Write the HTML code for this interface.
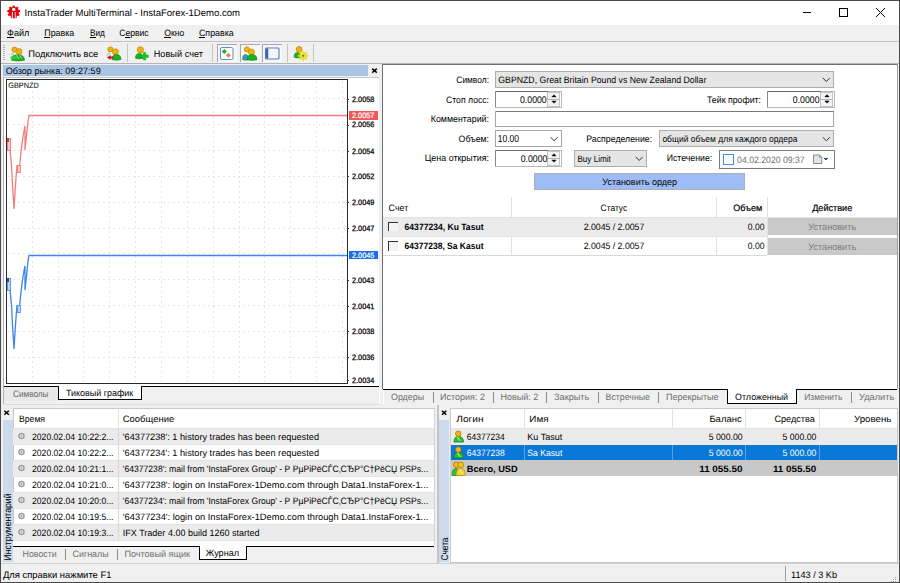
<!DOCTYPE html>
<html><head><meta charset="utf-8"><style>
html,body{margin:0;padding:0;width:900px;height:583px;overflow:hidden;background:#f0f0f0}
svg{display:block}
text{font-family:"Liberation Sans",sans-serif;stroke:currentColor;stroke-width:0px}
</style></head><body>
<svg width="900" height="583" viewBox="0 0 900 583" shape-rendering="crispEdges" text-rendering="geometricPrecision">
<rect x="0" y="0" width="900" height="583" fill="#f0f0f0" />
<rect x="0" y="0" width="900" height="25" fill="#ffffff" />
<g fill="#e8000c" shape-rendering="geometricPrecision"><circle cx="13.7" cy="12" r="5.2"/><rect x="12.6" y="5.6" width="2.2" height="2.6" transform="rotate(0 13.7 12)"/><rect x="12.6" y="5.6" width="2.2" height="2.6" transform="rotate(40 13.7 12)"/><rect x="12.6" y="5.6" width="2.2" height="2.6" transform="rotate(80 13.7 12)"/><rect x="12.6" y="5.6" width="2.2" height="2.6" transform="rotate(120 13.7 12)"/><rect x="12.6" y="5.6" width="2.2" height="2.6" transform="rotate(160 13.7 12)"/><rect x="12.6" y="5.6" width="2.2" height="2.6" transform="rotate(200 13.7 12)"/><rect x="12.6" y="5.6" width="2.2" height="2.6" transform="rotate(240 13.7 12)"/><rect x="12.6" y="5.6" width="2.2" height="2.6" transform="rotate(280 13.7 12)"/><rect x="12.6" y="5.6" width="2.2" height="2.6" transform="rotate(320 13.7 12)"/><circle cx="13.7" cy="9.5" r="1.7" fill="#fff"/><path d="M11.9,12 H12.9 V19 H11.9 Z M14.6,12 H15.6 V19 H14.6 Z" fill="#fff"/><rect x="12.9" y="11.6" width="1.7" height="6.8" fill="#b8141e"/></g>
<text x="24.5" y="16" font-size="9.6" fill="#000" color="#000" textLength="215.5" lengthAdjust="spacingAndGlyphs" >InstaTrader MultiTerminal - InstaForex-1Demo.com</text>
<line x1="802.5" y1="12.5" x2="811" y2="12.5" stroke="#000" stroke-width="1" />
<rect x="839.5" y="8.5" width="8" height="8" fill="none" stroke="#000" stroke-width="1" />
<line x1="876" y1="8" x2="885" y2="17" stroke="#000" stroke-width="1.1" />
<line x1="885" y1="8" x2="876" y2="17" stroke="#000" stroke-width="1.1" />
<rect x="1" y="25" width="898" height="16" fill="#f0f0f0" />
<text x="7" y="36.3" font-size="9.3" fill="#000" color="#000" textLength="22.3" lengthAdjust="spacingAndGlyphs" >Файл</text>
<text x="44.3" y="36.3" font-size="9.3" fill="#000" color="#000" textLength="30" lengthAdjust="spacingAndGlyphs" >Правка</text>
<text x="89.9" y="36.3" font-size="9.3" fill="#000" color="#000" textLength="15" lengthAdjust="spacingAndGlyphs" >Вид</text>
<text x="119.2" y="36.3" font-size="9.3" fill="#000" color="#000" textLength="29.5" lengthAdjust="spacingAndGlyphs" >Сервис</text>
<text x="164.3" y="36.3" font-size="9.3" fill="#000" color="#000" textLength="20" lengthAdjust="spacingAndGlyphs" >Окно</text>
<text x="199" y="36.3" font-size="9.3" fill="#000" color="#000" textLength="34.6" lengthAdjust="spacingAndGlyphs" >Справка</text>
<line x1="7" y1="37.8" x2="14" y2="37.8" stroke="#000" stroke-width="1" />
<line x1="44.3" y1="37.8" x2="50" y2="37.8" stroke="#000" stroke-width="1" />
<line x1="89.9" y1="37.8" x2="95.5" y2="37.8" stroke="#000" stroke-width="1" />
<line x1="124.5" y1="37.8" x2="129.5" y2="37.8" stroke="#000" stroke-width="1" />
<line x1="164.3" y1="37.8" x2="170.5" y2="37.8" stroke="#000" stroke-width="1" />
<line x1="199" y1="37.8" x2="205" y2="37.8" stroke="#000" stroke-width="1" />
<line x1="1" y1="41.5" x2="899" y2="41.5" stroke="#c4c4c4" stroke-width="1" />
<rect x="1" y="42" width="898" height="21" fill="#f0f0f0" />
<rect x="3" y="45" width="2" height="1" fill="#b4b4b4" />
<rect x="3" y="47" width="2" height="1" fill="#b4b4b4" />
<rect x="3" y="49" width="2" height="1" fill="#b4b4b4" />
<rect x="3" y="51" width="2" height="1" fill="#b4b4b4" />
<rect x="3" y="53" width="2" height="1" fill="#b4b4b4" />
<rect x="3" y="55" width="2" height="1" fill="#b4b4b4" />
<rect x="3" y="57" width="2" height="1" fill="#b4b4b4" />
<rect x="3" y="59" width="2" height="1" fill="#b4b4b4" />
<text x="28.3" y="56.7" font-size="9.3" fill="#000" color="#000" textLength="70" lengthAdjust="spacingAndGlyphs" >Подключить все</text>
<text x="153.7" y="56.7" font-size="9.3" fill="#000" color="#000" textLength="49.3" lengthAdjust="spacingAndGlyphs" >Новый счет</text>
<line x1="127.7" y1="44" x2="127.7" y2="61.5" stroke="#c4c4c4" stroke-width="1" />
<line x1="212.5" y1="44" x2="212.5" y2="61.5" stroke="#c4c4c4" stroke-width="1" />
<line x1="287" y1="44" x2="287" y2="61.5" stroke="#c4c4c4" stroke-width="1" />
<line x1="313" y1="44" x2="313" y2="61.5" stroke="#c4c4c4" stroke-width="1" />
<rect x="217" y="44" width="20" height="18" fill="#f7f7f7" />
<line x1="217.5" y1="44" x2="217.5" y2="62" stroke="#a8a8a8" stroke-width="1" />
<line x1="217" y1="44.5" x2="237" y2="44.5" stroke="#a8a8a8" stroke-width="1" />
<rect x="240" y="44" width="20" height="18" fill="#f7f7f7" />
<line x1="240.5" y1="44" x2="240.5" y2="62" stroke="#a8a8a8" stroke-width="1" />
<line x1="240" y1="44.5" x2="260" y2="44.5" stroke="#a8a8a8" stroke-width="1" />
<rect x="262" y="44" width="20" height="18" fill="#f7f7f7" />
<line x1="262.5" y1="44" x2="262.5" y2="62" stroke="#a8a8a8" stroke-width="1" />
<line x1="262" y1="44.5" x2="282" y2="44.5" stroke="#a8a8a8" stroke-width="1" />
<line x1="1" y1="63.5" x2="899" y2="63.5" stroke="#b4b4b4" stroke-width="1" />
<rect x="3" y="65" width="365" height="11" fill="#a9c5e3" />
<text x="5.7" y="74" font-size="9.2" fill="#000" color="#000" textLength="95" lengthAdjust="spacingAndGlyphs" >Обзор рынка: 09:27:59</text>
<path d="M372.2,68.6 L376.8,72.6 M376.8,68.6 L372.2,72.6" fill="none" stroke="#000" stroke-width="1.4" shape-rendering="geometricPrecision"/>
<line x1="3" y1="77.5" x2="379" y2="77.5" stroke="#c8c8c8" stroke-width="1" />
<rect x="379" y="64" width="3" height="325" fill="#f0f0f0" />
<rect x="4" y="78" width="375" height="308" fill="#ffffff" />
<rect x="6.5" y="79.5" width="341" height="304" fill="#ffffff" stroke="#2a2a2a" stroke-width="1" />
<line x1="3.5" y1="77" x2="3.5" y2="404" stroke="#b4b4b4" stroke-width="1" />
<line x1="32.5" y1="81" x2="32.5" y2="382" stroke="#e6e6e6" stroke-width="1" stroke-dasharray="2 3"/>
<line x1="58.5" y1="81" x2="58.5" y2="382" stroke="#e6e6e6" stroke-width="1" stroke-dasharray="2 3"/>
<line x1="83.5" y1="81" x2="83.5" y2="382" stroke="#e6e6e6" stroke-width="1" stroke-dasharray="2 3"/>
<line x1="109.5" y1="81" x2="109.5" y2="382" stroke="#e6e6e6" stroke-width="1" stroke-dasharray="2 3"/>
<line x1="135.5" y1="81" x2="135.5" y2="382" stroke="#e6e6e6" stroke-width="1" stroke-dasharray="2 3"/>
<line x1="161.5" y1="81" x2="161.5" y2="382" stroke="#e6e6e6" stroke-width="1" stroke-dasharray="2 3"/>
<line x1="187.5" y1="81" x2="187.5" y2="382" stroke="#e6e6e6" stroke-width="1" stroke-dasharray="2 3"/>
<line x1="213.5" y1="81" x2="213.5" y2="382" stroke="#e6e6e6" stroke-width="1" stroke-dasharray="2 3"/>
<line x1="239.5" y1="81" x2="239.5" y2="382" stroke="#e6e6e6" stroke-width="1" stroke-dasharray="2 3"/>
<line x1="264.5" y1="81" x2="264.5" y2="382" stroke="#e6e6e6" stroke-width="1" stroke-dasharray="2 3"/>
<line x1="290.5" y1="81" x2="290.5" y2="382" stroke="#e6e6e6" stroke-width="1" stroke-dasharray="2 3"/>
<line x1="316.5" y1="81" x2="316.5" y2="382" stroke="#e6e6e6" stroke-width="1" stroke-dasharray="2 3"/>
<line x1="342.5" y1="81" x2="342.5" y2="382" stroke="#e6e6e6" stroke-width="1" stroke-dasharray="2 3"/>
<line x1="8" y1="98.5" x2="346" y2="98.5" stroke="#e6e6e6" stroke-width="1" stroke-dasharray="2 3"/>
<line x1="8" y1="124.5" x2="346" y2="124.5" stroke="#e6e6e6" stroke-width="1" stroke-dasharray="2 3"/>
<line x1="8" y1="150.5" x2="346" y2="150.5" stroke="#e6e6e6" stroke-width="1" stroke-dasharray="2 3"/>
<line x1="8" y1="176.5" x2="346" y2="176.5" stroke="#e6e6e6" stroke-width="1" stroke-dasharray="2 3"/>
<line x1="8" y1="202.5" x2="346" y2="202.5" stroke="#e6e6e6" stroke-width="1" stroke-dasharray="2 3"/>
<line x1="8" y1="228.5" x2="346" y2="228.5" stroke="#e6e6e6" stroke-width="1" stroke-dasharray="2 3"/>
<line x1="8" y1="253.5" x2="346" y2="253.5" stroke="#e6e6e6" stroke-width="1" stroke-dasharray="2 3"/>
<line x1="8" y1="279.5" x2="346" y2="279.5" stroke="#e6e6e6" stroke-width="1" stroke-dasharray="2 3"/>
<line x1="8" y1="305.5" x2="346" y2="305.5" stroke="#e6e6e6" stroke-width="1" stroke-dasharray="2 3"/>
<line x1="8" y1="331.5" x2="346" y2="331.5" stroke="#e6e6e6" stroke-width="1" stroke-dasharray="2 3"/>
<line x1="8" y1="357.5" x2="346" y2="357.5" stroke="#e6e6e6" stroke-width="1" stroke-dasharray="2 3"/>
<text x="8.3" y="87.7" font-size="7.8" fill="#000" color="#000" textLength="30.4" lengthAdjust="spacingAndGlyphs" >GBPNZD</text>
<path d="M10,150 L11.5,165 L12.5,185 L14,209 L15,192 L16,178 L17,165 M19.5,167 L21,152 L22.5,140 L24,131 L25,126 V150 L26.5,136 L28,121 L29,115.5 H347" fill="none" stroke="#f47c7c" stroke-width="1.3" shape-rendering="geometricPrecision"/>
<path d="M10,290 L11.5,305 L12.5,325 L14,349 L15,332 L16,318 L17,305 M19.5,307 L21,292 L22.5,280 L24,271 L25,266 V290 L26.5,276 L28,261 L29,255.5 H347" fill="none" stroke="#3d84ee" stroke-width="1.3" shape-rendering="geometricPrecision"/>
<rect x="7" y="138" width="3.5" height="12" fill="#f8c8c8" stroke="#f07070" stroke-width="0.8" />
<rect x="7" y="138" width="2" height="4" fill="#c83c3c" />
<rect x="17" y="165" width="3" height="7.5" fill="#f8c8c8" stroke="#f07070" stroke-width="0.8" />
<rect x="7" y="278" width="3.5" height="12" fill="#c0d4f4" stroke="#4a86e8" stroke-width="0.8" />
<rect x="7" y="278" width="2" height="4" fill="#2050a0" />
<rect x="17" y="305" width="3" height="7.5" fill="#c0d4f4" stroke="#4a86e8" stroke-width="0.8" />
<rect x="347" y="98.5" width="2" height="1.5" fill="#333" />
<text x="352" y="101.8" font-size="7.8" fill="#000" color="#000" textLength="22.3" lengthAdjust="spacingAndGlyphs" style="stroke-width:0.25px">2.0058</text>
<rect x="347" y="124.5" width="2" height="1.5" fill="#333" />
<text x="352" y="127.39999999999999" font-size="7.8" fill="#000" color="#000" textLength="22.3" lengthAdjust="spacingAndGlyphs" style="stroke-width:0.25px">2.0056</text>
<rect x="347" y="150.5" width="2" height="1.5" fill="#333" />
<text x="352" y="153.70000000000002" font-size="7.8" fill="#000" color="#000" textLength="22.3" lengthAdjust="spacingAndGlyphs" style="stroke-width:0.25px">2.0054</text>
<rect x="347" y="175.5" width="2" height="1.5" fill="#333" />
<text x="352" y="179.10000000000002" font-size="7.8" fill="#000" color="#000" textLength="22.3" lengthAdjust="spacingAndGlyphs" style="stroke-width:0.25px">2.0052</text>
<rect x="347" y="201.5" width="2" height="1.5" fill="#333" />
<text x="352" y="204.8" font-size="7.8" fill="#000" color="#000" textLength="22.3" lengthAdjust="spacingAndGlyphs" style="stroke-width:0.25px">2.0049</text>
<rect x="347" y="227.5" width="2" height="1.5" fill="#333" />
<text x="352" y="230.60000000000002" font-size="7.8" fill="#000" color="#000" textLength="22.3" lengthAdjust="spacingAndGlyphs" style="stroke-width:0.25px">2.0047</text>
<rect x="347" y="279.5" width="2" height="1.5" fill="#333" />
<text x="352" y="282.6" font-size="7.8" fill="#000" color="#000" textLength="22.3" lengthAdjust="spacingAndGlyphs" style="stroke-width:0.25px">2.0043</text>
<rect x="347" y="305.5" width="2" height="1.5" fill="#333" />
<text x="352" y="308.6" font-size="7.8" fill="#000" color="#000" textLength="22.3" lengthAdjust="spacingAndGlyphs" style="stroke-width:0.25px">2.0041</text>
<rect x="347" y="330.5" width="2" height="1.5" fill="#333" />
<text x="352" y="334.0" font-size="7.8" fill="#000" color="#000" textLength="22.3" lengthAdjust="spacingAndGlyphs" style="stroke-width:0.25px">2.0038</text>
<rect x="347" y="356.5" width="2" height="1.5" fill="#333" />
<text x="352" y="360.0" font-size="7.8" fill="#000" color="#000" textLength="22.3" lengthAdjust="spacingAndGlyphs" style="stroke-width:0.25px">2.0036</text>
<rect x="347" y="379.5" width="2" height="1.5" fill="#333" />
<text x="352" y="383.3" font-size="7.8" fill="#000" color="#000" textLength="22.3" lengthAdjust="spacingAndGlyphs" style="stroke-width:0.25px">2.0034</text>
<rect x="349" y="111" width="29" height="8.5" fill="#f05858" />
<text x="352" y="117.8" font-size="7.8" fill="#fff" color="#fff" textLength="22.3" lengthAdjust="spacingAndGlyphs" style="stroke-width:0.2px">2.0057</text>
<rect x="349" y="250.5" width="29" height="8.5" fill="#1a6ee8" />
<text x="352" y="257.5" font-size="7.8" fill="#fff" color="#fff" textLength="22.3" lengthAdjust="spacingAndGlyphs" style="stroke-width:0.2px">2.0045</text>
<rect x="4" y="384" width="375" height="3" fill="#ffffff" />
<rect x="4" y="387" width="375" height="17" fill="#f0f0f0" />
<rect x="4" y="387" width="54" height="14" fill="#e9e9e9" />
<line x1="4" y1="386.5" x2="58.5" y2="386.5" stroke="#000" stroke-width="1" />
<line x1="142" y1="386.5" x2="379" y2="386.5" stroke="#000" stroke-width="1" />
<rect x="58" y="384" width="84" height="16" fill="#ffffff" />
<path d="M58.5,386 V399.5 H141.5 V386" fill="none" stroke="#000" stroke-width="1.2" />
<text x="13" y="396.5" font-size="9.2" fill="#666666" color="#666666" textLength="35.5" lengthAdjust="spacingAndGlyphs" >Символы</text>
<text x="66" y="396" font-size="9.2" fill="#000" color="#000" textLength="67.3" lengthAdjust="spacingAndGlyphs" >Тиковый график</text>
<line x1="379.5" y1="386" x2="379.5" y2="404" stroke="#ffffff" stroke-width="1" />
<line x1="4" y1="404.5" x2="380" y2="404.5" stroke="#dcdcdc" stroke-width="1" />
<rect x="382" y="64" width="516" height="325" fill="#ffffff" />
<line x1="382.5" y1="64" x2="382.5" y2="389" stroke="#6e6e6e" stroke-width="1" />
<line x1="382" y1="64.5" x2="898" y2="64.5" stroke="#6e6e6e" stroke-width="1" />
<line x1="897.5" y1="64" x2="897.5" y2="389" stroke="#a0a0a0" stroke-width="1" />
<text x="456.3" y="82.8" font-size="9.3" fill="#000" color="#000" textLength="32.7" lengthAdjust="spacingAndGlyphs" >Символ:</text>
<text x="446" y="102.7" font-size="9.3" fill="#000" color="#000" textLength="43" lengthAdjust="spacingAndGlyphs" >Стоп лосс:</text>
<text x="430.8" y="122.2" font-size="9.3" fill="#000" color="#000" textLength="58.2" lengthAdjust="spacingAndGlyphs" >Комментарий:</text>
<text x="458.6" y="141.8" font-size="9.3" fill="#000" color="#000" textLength="30.4" lengthAdjust="spacingAndGlyphs" >Объем:</text>
<text x="424.8" y="161.3" font-size="9.3" fill="#000" color="#000" textLength="64.2" lengthAdjust="spacingAndGlyphs" >Цена открытия:</text>
<text x="707" y="102.5" font-size="9.3" fill="#000" color="#000" textLength="54" lengthAdjust="spacingAndGlyphs" >Тейк профит:</text>
<text x="586.3000000000001" y="142.2" font-size="9.3" fill="#000" color="#000" textLength="65.8" lengthAdjust="spacingAndGlyphs" >Распределение:</text>
<text x="666.7" y="161.4" font-size="9.3" fill="#000" color="#000" textLength="45.5" lengthAdjust="spacingAndGlyphs" >Истечение:</text>
<rect x="495.5" y="71.5" width="338" height="16" fill="#e5e5e5" stroke="#adadad" stroke-width="1" />
<text x="498.3" y="82.9" font-size="9.2" fill="#000" color="#000" textLength="208" lengthAdjust="spacingAndGlyphs" >GBPNZD,  Great Britain Pound vs New Zealand Dollar</text>
<path d="M822.8,77.9 L826.3,81.5 L829.8,77.9" fill="none" stroke="#333" stroke-width="1" shape-rendering="geometricPrecision"/>
<rect x="495.5" y="91.8" width="65.5" height="15.5" fill="#ffffff" stroke="#b8b8b8" stroke-width="1" />
<line x1="495" y1="91.8" x2="548" y2="91.8" stroke="#6a6a6a" stroke-width="1" />
<line x1="495.5" y1="91.3" x2="495.5" y2="107.3" stroke="#8a8a8a" stroke-width="1" />
<rect x="547.5" y="92.8" width="12" height="13.5" fill="#f4f4f4" stroke="#c4c4c4" stroke-width="1" />
<line x1="547.5" y1="99.3" x2="559.5" y2="99.3" stroke="#b0b0b0" stroke-width="1" />
<path d="M551.8,97.0 L554,94.7 L556.2,97.0 Z" fill="#000" stroke="#000" stroke-width="0.4" shape-rendering="geometricPrecision"/>
<path d="M551.8,101.0 L554,103.3 L556.2,101.0 Z" fill="#000" stroke="#000" stroke-width="0.4" shape-rendering="geometricPrecision"/>
<text x="546.7" y="102.6" font-size="9.7" fill="#000" color="#000" text-anchor="end" textLength="26.7" lengthAdjust="spacingAndGlyphs" >0.0000</text>
<rect x="767.5" y="91.7" width="66.5" height="15.5" fill="#ffffff" stroke="#b8b8b8" stroke-width="1" />
<line x1="767" y1="91.7" x2="821" y2="91.7" stroke="#6a6a6a" stroke-width="1" />
<line x1="767.5" y1="91.2" x2="767.5" y2="107.2" stroke="#8a8a8a" stroke-width="1" />
<rect x="820.5" y="92.7" width="12" height="13.5" fill="#f4f4f4" stroke="#c4c4c4" stroke-width="1" />
<line x1="820.5" y1="99.2" x2="832.5" y2="99.2" stroke="#b0b0b0" stroke-width="1" />
<path d="M824.8,96.9 L827,94.60000000000001 L829.2,96.9 Z" fill="#000" stroke="#000" stroke-width="0.4" shape-rendering="geometricPrecision"/>
<path d="M824.8,100.9 L827,103.2 L829.2,100.9 Z" fill="#000" stroke="#000" stroke-width="0.4" shape-rendering="geometricPrecision"/>
<text x="819.5" y="102.5" font-size="9.7" fill="#000" color="#000" text-anchor="end" textLength="26.7" lengthAdjust="spacingAndGlyphs" >0.0000</text>
<rect x="495.5" y="111.2" width="338" height="15" fill="#ffffff" stroke="#a6a6a6" stroke-width="1" />
<line x1="495.5" y1="111.2" x2="833.5" y2="111.2" stroke="#7a7a7a" stroke-width="1" />
<rect x="495.5" y="130.5" width="65.5" height="15.5" fill="#ffffff" stroke="#a6a6a6" stroke-width="1" />
<text x="497.7" y="141.6" font-size="10.2" fill="#000" color="#000" textLength="21.3" lengthAdjust="spacingAndGlyphs" >10.00</text>
<path d="M550.6,137.2 L554.1,140.8 L557.6,137.2" fill="none" stroke="#333" stroke-width="1" shape-rendering="geometricPrecision"/>
<rect x="659" y="130.5" width="174.5" height="16" fill="#e5e5e5" stroke="#adadad" stroke-width="1" />
<text x="662.4" y="142.2" font-size="9.2" fill="#000" color="#000" textLength="135" lengthAdjust="spacingAndGlyphs" >общий объем для каждого ордера</text>
<path d="M822.8,137.2 L826.3,140.8 L829.8,137.2" fill="none" stroke="#333" stroke-width="1" shape-rendering="geometricPrecision"/>
<rect x="495.5" y="150.8" width="65.5" height="15.5" fill="#ffffff" stroke="#b8b8b8" stroke-width="1" />
<line x1="495" y1="150.8" x2="548" y2="150.8" stroke="#6a6a6a" stroke-width="1" />
<line x1="495.5" y1="150.3" x2="495.5" y2="166.3" stroke="#8a8a8a" stroke-width="1" />
<rect x="547.5" y="151.8" width="12" height="13.5" fill="#f4f4f4" stroke="#c4c4c4" stroke-width="1" />
<line x1="547.5" y1="158.3" x2="559.5" y2="158.3" stroke="#b0b0b0" stroke-width="1" />
<path d="M551.8,156.0 L554,153.70000000000002 L556.2,156.0 Z" fill="#000" stroke="#000" stroke-width="0.4" shape-rendering="geometricPrecision"/>
<path d="M551.8,160.0 L554,162.3 L556.2,160.0 Z" fill="#000" stroke="#000" stroke-width="0.4" shape-rendering="geometricPrecision"/>
<text x="547.4" y="161.60000000000002" font-size="9.7" fill="#000" color="#000" text-anchor="end" textLength="26.7" lengthAdjust="spacingAndGlyphs" >0.0000</text>
<rect x="574" y="150.5" width="72.5" height="16" fill="#e5e5e5" stroke="#adadad" stroke-width="1" />
<text x="577.4" y="162" font-size="9.2" fill="#000" color="#000" textLength="33.5" lengthAdjust="spacingAndGlyphs" >Buy Limit</text>
<path d="M635.7,156.89999999999998 L639.2,160.5 L642.7,156.89999999999998" fill="none" stroke="#333" stroke-width="1" shape-rendering="geometricPrecision"/>
<rect x="719.5" y="150.5" width="115" height="17.5" fill="#ffffff" stroke="#7a7a7a" stroke-width="1" />
<rect x="723.5" y="154.5" width="10" height="10" fill="#ffffff" stroke="#3c8ce6" stroke-width="1" />
<text x="737.1" y="163.1" font-size="9.2" fill="#6d6d6d" color="#6d6d6d" textLength="67.6" lengthAdjust="spacingAndGlyphs" >04.02.2020 09:37</text>
<path d="M813.5,155 H819.5 L821.8,157.3 V163.5 H813.5 Z" fill="#e4e4e4" stroke="#8a8a8a" stroke-width="1" shape-rendering="geometricPrecision"/>
<path d="M819.5,155 V157.3 H821.8" fill="none" stroke="#8a8a8a" stroke-width="0.8" shape-rendering="geometricPrecision"/>
<path d="M823.5,157.5 L829,157.5 L826.25,160.5 Z" fill="#2b4f9e" />
<rect x="534.5" y="173.5" width="210" height="16" fill="#9ebcf5" stroke="#b0b0b0" stroke-width="1" />
<text x="602.3" y="184.6" font-size="9.2" fill="#000" color="#000" textLength="74.7" lengthAdjust="spacingAndGlyphs" >Установить ордер</text>
<rect x="383" y="197" width="514" height="20" fill="#ffffff" />
<line x1="383" y1="217.5" x2="897" y2="217.5" stroke="#e2e2e2" stroke-width="1" />
<line x1="511.5" y1="197" x2="511.5" y2="255" stroke="#e2e2e2" stroke-width="1" />
<line x1="716.5" y1="197" x2="716.5" y2="255" stroke="#e2e2e2" stroke-width="1" />
<line x1="767.5" y1="197" x2="767.5" y2="255" stroke="#e2e2e2" stroke-width="1" />
<text x="388.6" y="210.6" font-size="9.2" fill="#000" color="#000" textLength="19.6" lengthAdjust="spacingAndGlyphs" >Счет</text>
<text x="600.6" y="210.9" font-size="9.2" fill="#000" color="#000" textLength="26.6" lengthAdjust="spacingAndGlyphs" >Статус</text>
<text x="733.3" y="210.6" font-size="9.2" fill="#000" color="#000" textLength="28.9" lengthAdjust="spacingAndGlyphs" style="stroke-width:0.2px">Объем</text>
<text x="812.2" y="210.6" font-size="9.2" fill="#000" color="#000" textLength="40" lengthAdjust="spacingAndGlyphs" style="stroke-width:0.2px">Действие</text>
<rect x="383" y="218" width="384" height="17.5" fill="#ebebeb" />
<line x1="383" y1="236.5" x2="767" y2="236.5" stroke="#e2e2e2" stroke-width="1" />
<line x1="383" y1="255.5" x2="767" y2="255.5" stroke="#d8d8d8" stroke-width="1" />
<rect x="388.5" y="222.0" width="9" height="9" fill="#f4f4f4" />
<path d="M388.5,231.0 V222.0 H397.5" fill="none" stroke="#333" stroke-width="1" />
<text x="404.6" y="229.6" font-size="9.2" fill="#000" color="#000" font-weight="bold" style="stroke-width:0" textLength="78.9" lengthAdjust="spacingAndGlyphs" >64377234, Ku Tasut</text>
<text x="583.7" y="229.6" font-size="9.2" fill="#000" color="#000" textLength="60.6" lengthAdjust="spacingAndGlyphs" >2.0045 / 2.0057</text>
<text x="764.4" y="229.6" font-size="9.2" fill="#000" color="#000" text-anchor="end" textLength="16.6" lengthAdjust="spacingAndGlyphs" >0.00</text>
<rect x="768" y="218" width="129" height="17" fill="#c9c9c9" />
<text x="808.2" y="230" font-size="9.6" fill="#7e7e7e" color="#7e7e7e" textLength="48" lengthAdjust="spacingAndGlyphs" >Установить</text>
<rect x="388.5" y="241.5" width="9" height="9" fill="#f4f4f4" />
<path d="M388.5,250.5 V241.5 H397.5" fill="none" stroke="#333" stroke-width="1" />
<text x="404.6" y="249.4" font-size="9.2" fill="#000" color="#000" font-weight="bold" style="stroke-width:0" textLength="78.9" lengthAdjust="spacingAndGlyphs" >64377238, Sa Kasut</text>
<text x="583.7" y="249.4" font-size="9.2" fill="#000" color="#000" textLength="60.6" lengthAdjust="spacingAndGlyphs" >2.0045 / 2.0057</text>
<text x="764.4" y="249.4" font-size="9.2" fill="#000" color="#000" text-anchor="end" textLength="16.6" lengthAdjust="spacingAndGlyphs" >0.00</text>
<rect x="768" y="238" width="129" height="17" fill="#c9c9c9" />
<text x="808.2" y="250" font-size="9.6" fill="#7e7e7e" color="#7e7e7e" textLength="48" lengthAdjust="spacingAndGlyphs" >Установить</text>
<rect x="383" y="389" width="515" height="16" fill="#f0f0f0" />
<line x1="383" y1="389.5" x2="727" y2="389.5" stroke="#000" stroke-width="1" />
<line x1="797" y1="389.5" x2="897" y2="389.5" stroke="#000" stroke-width="1" />
<rect x="727" y="386" width="70" height="17.5" fill="#ffffff" />
<path d="M727.5,389 V403.5 H796.5 V389" fill="none" stroke="#000" stroke-width="1" />
<text x="391" y="400.3" font-size="9.2" fill="#6d6d6d" color="#6d6d6d" textLength="33" lengthAdjust="spacingAndGlyphs" >Ордеры</text>
<text x="440" y="400.3" font-size="9.2" fill="#6d6d6d" color="#6d6d6d" textLength="45" lengthAdjust="spacingAndGlyphs" >История: 2</text>
<text x="500.4" y="400.3" font-size="9.2" fill="#6d6d6d" color="#6d6d6d" textLength="37.8" lengthAdjust="spacingAndGlyphs" >Новый: 2</text>
<text x="554" y="400.3" font-size="9.2" fill="#6d6d6d" color="#6d6d6d" textLength="35.3" lengthAdjust="spacingAndGlyphs" >Закрыть</text>
<text x="605.6" y="400.3" font-size="9.2" fill="#6d6d6d" color="#6d6d6d" textLength="44.4" lengthAdjust="spacingAndGlyphs" >Встречные</text>
<text x="666" y="400.3" font-size="9.2" fill="#6d6d6d" color="#6d6d6d" textLength="52.6" lengthAdjust="spacingAndGlyphs" >Перекрытые</text>
<text x="804.2" y="400.3" font-size="9.2" fill="#6d6d6d" color="#6d6d6d" textLength="38.1" lengthAdjust="spacingAndGlyphs" >Изменить</text>
<text x="859" y="400.3" font-size="9.2" fill="#6d6d6d" color="#6d6d6d" textLength="35.3" lengthAdjust="spacingAndGlyphs" >Удалить</text>
<line x1="433" y1="392" x2="433" y2="402.5" stroke="#8c8c8c" stroke-width="1" />
<line x1="493.3" y1="392" x2="493.3" y2="402.5" stroke="#8c8c8c" stroke-width="1" />
<line x1="546.7" y1="392" x2="546.7" y2="402.5" stroke="#8c8c8c" stroke-width="1" />
<line x1="598.4" y1="392" x2="598.4" y2="402.5" stroke="#8c8c8c" stroke-width="1" />
<line x1="658.9" y1="392" x2="658.9" y2="402.5" stroke="#8c8c8c" stroke-width="1" />
<line x1="851.8" y1="392" x2="851.8" y2="402.5" stroke="#8c8c8c" stroke-width="1" />
<line x1="383.5" y1="390" x2="383.5" y2="404" stroke="#ffffff" stroke-width="1" />
<text x="735.1" y="399.8" font-size="9.2" fill="#000" color="#000" textLength="52.9" lengthAdjust="spacingAndGlyphs" >Отложенный</text>
<path d="M4.3,410.8 L8.9,414.8 M8.9,410.8 L4.3,414.8" fill="none" stroke="#000" stroke-width="1.5" shape-rendering="geometricPrecision"/>
<rect x="2.5" y="420" width="10" height="142" fill="#ccdbeb" />
<text transform="translate(11,560.5) rotate(-90)" font-size="9.8" fill="#000" color="#000" textLength="67" lengthAdjust="spacingAndGlyphs">Инструментарий</text>
<rect x="13" y="408" width="421" height="133" fill="#ffffff" />
<line x1="13" y1="408.5" x2="434" y2="408.5" stroke="#c8c8c8" stroke-width="1" />
<line x1="13.5" y1="408" x2="13.5" y2="545" stroke="#c8c8c8" stroke-width="1" />
<line x1="118.5" y1="408" x2="118.5" y2="541" stroke="#e2e2e2" stroke-width="1" />
<line x1="13" y1="428.5" x2="434" y2="428.5" stroke="#e2e2e2" stroke-width="1" />
<text x="19" y="422" font-size="9.2" fill="#000" color="#000" textLength="26" lengthAdjust="spacingAndGlyphs" >Время</text>
<text x="122.8" y="422" font-size="9.2" fill="#000" color="#000" textLength="51.4" lengthAdjust="spacingAndGlyphs" >Сообщение</text>
<rect x="13" y="429" width="421" height="15" fill="#ebebeb" />
<line x1="13" y1="444.5" x2="434" y2="444.5" stroke="#e2e2e2" stroke-width="1" />
<circle cx="21.5" cy="436" r="2.6" fill="#dedede" stroke="#9c9c9c" stroke-width="1.3" shape-rendering="geometricPrecision"/>
<circle cx="21.5" cy="436" r="0.8" fill="#9c9c9c" shape-rendering="geometricPrecision"/>
<text x="32" y="440" font-size="9.2" fill="#000" color="#000" textLength="81.5" lengthAdjust="spacingAndGlyphs" >2020.02.04 10:22:2...</text>
<text x="122.8" y="440" font-size="9.2" fill="#000" color="#000" textLength="196.2" lengthAdjust="spacingAndGlyphs" >&#x27;64377238&#x27;: 1 history trades has been requested</text>
<line x1="13" y1="460.5" x2="434" y2="460.5" stroke="#e2e2e2" stroke-width="1" />
<circle cx="21.5" cy="452" r="2.6" fill="#dedede" stroke="#9c9c9c" stroke-width="1.3" shape-rendering="geometricPrecision"/>
<circle cx="21.5" cy="452" r="0.8" fill="#9c9c9c" shape-rendering="geometricPrecision"/>
<text x="32" y="456" font-size="9.2" fill="#000" color="#000" textLength="81.5" lengthAdjust="spacingAndGlyphs" >2020.02.04 10:22:2...</text>
<text x="122.8" y="456" font-size="9.2" fill="#000" color="#000" textLength="196.2" lengthAdjust="spacingAndGlyphs" >&#x27;64377234&#x27;: 1 history trades has been requested</text>
<rect x="13" y="461" width="421" height="15" fill="#ebebeb" />
<line x1="13" y1="476.5" x2="434" y2="476.5" stroke="#e2e2e2" stroke-width="1" />
<circle cx="21.5" cy="468" r="2.6" fill="#dedede" stroke="#9c9c9c" stroke-width="1.3" shape-rendering="geometricPrecision"/>
<circle cx="21.5" cy="468" r="0.8" fill="#9c9c9c" shape-rendering="geometricPrecision"/>
<text x="32" y="472" font-size="9.2" fill="#000" color="#000" textLength="81.5" lengthAdjust="spacingAndGlyphs" >2020.02.04 10:21:1...</text>
<text x="122.8" y="472" font-size="9.2" fill="#000" color="#000" textLength="305.5" lengthAdjust="spacingAndGlyphs" >&#x27;64377238&#x27;: mail from &#x27;InstaForex Group&#x27; - Р РµРіРёСЃС‚СЂР°С†РёСЏ PSPs...</text>
<line x1="13" y1="492.5" x2="434" y2="492.5" stroke="#e2e2e2" stroke-width="1" />
<circle cx="21.5" cy="484" r="2.6" fill="#dedede" stroke="#9c9c9c" stroke-width="1.3" shape-rendering="geometricPrecision"/>
<circle cx="21.5" cy="484" r="0.8" fill="#9c9c9c" shape-rendering="geometricPrecision"/>
<text x="32" y="488" font-size="9.2" fill="#000" color="#000" textLength="81.5" lengthAdjust="spacingAndGlyphs" >2020.02.04 10:21:0...</text>
<text x="122.8" y="488" font-size="9.2" fill="#000" color="#000" textLength="305.5" lengthAdjust="spacingAndGlyphs" >&#x27;64377238&#x27;: login on InstaForex-1Demo.com through Data1.InstaForex-1...</text>
<rect x="13" y="493" width="421" height="15" fill="#ebebeb" />
<line x1="13" y1="508.5" x2="434" y2="508.5" stroke="#e2e2e2" stroke-width="1" />
<circle cx="21.5" cy="500" r="2.6" fill="#dedede" stroke="#9c9c9c" stroke-width="1.3" shape-rendering="geometricPrecision"/>
<circle cx="21.5" cy="500" r="0.8" fill="#9c9c9c" shape-rendering="geometricPrecision"/>
<text x="32" y="504" font-size="9.2" fill="#000" color="#000" textLength="81.5" lengthAdjust="spacingAndGlyphs" >2020.02.04 10:20:0...</text>
<text x="122.8" y="504" font-size="9.2" fill="#000" color="#000" textLength="305.5" lengthAdjust="spacingAndGlyphs" >&#x27;64377234&#x27;: mail from &#x27;InstaForex Group&#x27; - Р РµРіРёСЃС‚СЂР°С†РёСЏ PSPs...</text>
<line x1="13" y1="524.5" x2="434" y2="524.5" stroke="#e2e2e2" stroke-width="1" />
<circle cx="21.5" cy="516" r="2.6" fill="#dedede" stroke="#9c9c9c" stroke-width="1.3" shape-rendering="geometricPrecision"/>
<circle cx="21.5" cy="516" r="0.8" fill="#9c9c9c" shape-rendering="geometricPrecision"/>
<text x="32" y="520" font-size="9.2" fill="#000" color="#000" textLength="81.5" lengthAdjust="spacingAndGlyphs" >2020.02.04 10:19:5...</text>
<text x="122.8" y="520" font-size="9.2" fill="#000" color="#000" textLength="305.5" lengthAdjust="spacingAndGlyphs" >&#x27;64377234&#x27;: login on InstaForex-1Demo.com through Data1.InstaForex-1...</text>
<rect x="13" y="525" width="421" height="15" fill="#ebebeb" />
<line x1="13" y1="540.5" x2="434" y2="540.5" stroke="#e2e2e2" stroke-width="1" />
<circle cx="21.5" cy="532" r="2.6" fill="#dedede" stroke="#9c9c9c" stroke-width="1.3" shape-rendering="geometricPrecision"/>
<circle cx="21.5" cy="532" r="0.8" fill="#9c9c9c" shape-rendering="geometricPrecision"/>
<text x="32" y="536" font-size="9.2" fill="#000" color="#000" textLength="81.5" lengthAdjust="spacingAndGlyphs" >2020.02.04 10:19:3...</text>
<text x="122.8" y="536" font-size="9.2" fill="#000" color="#000" textLength="136.8" lengthAdjust="spacingAndGlyphs" >IFX Trader 4.00 build 1260 started</text>
<line x1="118.5" y1="429" x2="118.5" y2="541" stroke="#d8d8d8" stroke-width="1" />
<line x1="434.5" y1="408" x2="434.5" y2="545" stroke="#d4d4d4" stroke-width="1" />
<rect x="13" y="541" width="421" height="5" fill="#ffffff" />
<line x1="13" y1="546.5" x2="199.5" y2="546.5" stroke="#000" stroke-width="1" />
<line x1="246.5" y1="546.5" x2="434" y2="546.5" stroke="#000" stroke-width="1" />
<text x="22.5" y="556.7" font-size="9.2" fill="#6d6d6d" color="#6d6d6d" textLength="34.2" lengthAdjust="spacingAndGlyphs" >Новости</text>
<text x="72.5" y="556.7" font-size="9.2" fill="#6d6d6d" color="#6d6d6d" textLength="36.1" lengthAdjust="spacingAndGlyphs" >Сигналы</text>
<text x="124.4" y="556.7" font-size="9.2" fill="#6d6d6d" color="#6d6d6d" textLength="65.6" lengthAdjust="spacingAndGlyphs" >Почтовый ящик</text>
<line x1="65.6" y1="549" x2="65.6" y2="559.5" stroke="#8c8c8c" stroke-width="1" />
<line x1="117.8" y1="549" x2="117.8" y2="559.5" stroke="#8c8c8c" stroke-width="1" />
<rect x="199" y="546" width="48" height="14" fill="#ffffff" />
<path d="M199.5,546 V559.5 H246.5 V546" fill="none" stroke="#000" stroke-width="1.2" />
<text x="205.8" y="556" font-size="9.2" fill="#000" color="#000" textLength="33.4" lengthAdjust="spacingAndGlyphs" >Журнал</text>
<rect x="436.5" y="405" width="2" height="158" fill="#c4c4c4" />
<path d="M442,410.7 L446.3,414.8 M446.3,410.7 L442,414.8" fill="none" stroke="#000" stroke-width="1.5" shape-rendering="geometricPrecision"/>
<rect x="439" y="420" width="10" height="142" fill="#ccdbeb" />
<text transform="translate(448,560.5) rotate(-90)" font-size="9.8" fill="#000" color="#000" textLength="23" lengthAdjust="spacingAndGlyphs">Счета</text>
<rect x="451" y="409" width="446" height="153" fill="#ffffff" />
<rect x="450.5" y="408.5" width="447" height="154" fill="none" stroke="#c8c8c8" stroke-width="1" />
<line x1="524.5" y1="409" x2="524.5" y2="476" stroke="#e2e2e2" stroke-width="1" />
<line x1="672.5" y1="409" x2="672.5" y2="476" stroke="#e2e2e2" stroke-width="1" />
<line x1="745.5" y1="409" x2="745.5" y2="476" stroke="#e2e2e2" stroke-width="1" />
<line x1="819.5" y1="409" x2="819.5" y2="476" stroke="#e2e2e2" stroke-width="1" />
<line x1="451" y1="428.5" x2="897" y2="428.5" stroke="#e2e2e2" stroke-width="1" />
<text x="456.3" y="422" font-size="9.2" fill="#000" color="#000" textLength="27.2" lengthAdjust="spacingAndGlyphs" >Логин</text>
<text x="529.3" y="422" font-size="9.2" fill="#000" color="#000" textLength="19.2" lengthAdjust="spacingAndGlyphs" >Имя</text>
<text x="741.7" y="422" font-size="9.2" fill="#000" color="#000" text-anchor="end" textLength="32.3" lengthAdjust="spacingAndGlyphs" >Баланс</text>
<text x="814.9" y="422" font-size="9.2" fill="#000" color="#000" text-anchor="end" textLength="40.5" lengthAdjust="spacingAndGlyphs" >Средства</text>
<text x="891.4" y="422" font-size="9.2" fill="#000" color="#000" text-anchor="end" textLength="37.5" lengthAdjust="spacingAndGlyphs" >Уровень</text>
<rect x="451" y="429" width="446" height="15.5" fill="#ebebeb" />
<rect x="451" y="444.5" width="446" height="15.8" fill="#0a78d7" />
<line x1="524.5" y1="444.5" x2="524.5" y2="460.3" stroke="#5aa0e0" stroke-width="1" />
<line x1="672.5" y1="444.5" x2="672.5" y2="460.3" stroke="#5aa0e0" stroke-width="1" />
<line x1="745.5" y1="444.5" x2="745.5" y2="460.3" stroke="#5aa0e0" stroke-width="1" />
<line x1="819.5" y1="444.5" x2="819.5" y2="460.3" stroke="#5aa0e0" stroke-width="1" />
<rect x="451" y="460.3" width="446" height="15.7" fill="#c8c8c8" />
<text x="466.8" y="439.8" font-size="9.2" fill="#000" color="#000" textLength="37.9" lengthAdjust="spacingAndGlyphs" >64377234</text>
<text x="527.3" y="439.8" font-size="9.2" fill="#000" color="#000" textLength="35" lengthAdjust="spacingAndGlyphs" >Ku Tasut</text>
<text x="742.6" y="439.8" font-size="9.2" fill="#000" color="#000" text-anchor="end" textLength="33.8" lengthAdjust="spacingAndGlyphs" >5 000.00</text>
<text x="816.3" y="439.8" font-size="9.2" fill="#000" color="#000" text-anchor="end" textLength="33.8" lengthAdjust="spacingAndGlyphs" >5 000.00</text>
<text x="466.8" y="455.8" font-size="9.2" fill="#ffffff" color="#ffffff" textLength="37.9" lengthAdjust="spacingAndGlyphs" >64377238</text>
<text x="527.3" y="455.8" font-size="9.2" fill="#ffffff" color="#ffffff" textLength="35" lengthAdjust="spacingAndGlyphs" >Sa Kasut</text>
<text x="742.6" y="455.8" font-size="9.2" fill="#ffffff" color="#ffffff" text-anchor="end" textLength="33.8" lengthAdjust="spacingAndGlyphs" >5 000.00</text>
<text x="816.3" y="455.8" font-size="9.2" fill="#ffffff" color="#ffffff" text-anchor="end" textLength="33.8" lengthAdjust="spacingAndGlyphs" >5 000.00</text>
<text x="466.8" y="472" font-size="9.2" fill="#000" color="#000" font-weight="bold" style="stroke-width:0" textLength="50.9" lengthAdjust="spacingAndGlyphs" >Всего, USD</text>
<text x="742.6" y="472" font-size="9.2" fill="#000" color="#000" font-weight="bold" style="stroke-width:0" text-anchor="end" textLength="43.4" lengthAdjust="spacingAndGlyphs" >11 055.50</text>
<text x="816.3" y="472" font-size="9.2" fill="#000" color="#000" font-weight="bold" style="stroke-width:0" text-anchor="end" textLength="43.4" lengthAdjust="spacingAndGlyphs" >11 055.50</text>
<line x1="1" y1="563.5" x2="899" y2="563.5" stroke="#d0d0d0" stroke-width="1" />
<rect x="1" y="564" width="898" height="18" fill="#f0f0f0" />
<text x="2.9" y="578.2" font-size="9.4" fill="#000" color="#000" textLength="108.6" lengthAdjust="spacingAndGlyphs" >Для справки нажмите F1</text>
<line x1="785.5" y1="566" x2="785.5" y2="581" stroke="#a0a0a0" stroke-width="1" />
<text x="791" y="578.2" font-size="9.4" fill="#000" color="#000" textLength="46" lengthAdjust="spacingAndGlyphs" >1143 / 3 Kb</text>
<rect x="895" y="579" width="1" height="1" fill="#a0a0a0" />
<rect x="893" y="581" width="1" height="1" fill="#a0a0a0" />
<rect x="895" y="581" width="1" height="1" fill="#a0a0a0" />
<rect x="891" y="581" width="1" height="1" fill="#a0a0a0" />
<rect x="893" y="579" width="1" height="1" fill="#a0a0a0" />
<rect x="895" y="577" width="1" height="1" fill="#a0a0a0" />
<rect x="0.5" y="0.5" width="899" height="582" fill="none" stroke="#4a4a4a" stroke-width="1" />
<g shape-rendering="geometricPrecision"><circle cx="14.5" cy="49.6" r="2.6" fill="#f2b20a" stroke="#b8860b" stroke-width="0.7"/><circle cx="19" cy="51.6" r="3" fill="#f2b20a" stroke="#b8860b" stroke-width="0.7"/><path d="M11.5,60.24 Q11.5,54.8 18,54.8 Q24.5,54.8 24.5,60.24 Q18,61.84 11.5,60.24 Z" fill="#19b31e" stroke="#0b7a10" stroke-width="0.5"/><path d="M10,57.5 L14,54.5 V56.3 H17 V58.7 H14 V60.5 Z" fill="#2ecc40"/><path d="M16.5,55 L19,59 M19.5,55 L21.5,58.5" stroke="#c8f0c8" stroke-width="0.8"/><path d="M11,54.5 L13.5,53" stroke="#6aa8d8" stroke-width="1"/></g>
<g shape-rendering="geometricPrecision"><circle cx="110.4" cy="49.4" r="2.6" fill="#f2b20a" stroke="#b8860b" stroke-width="0.7"/><circle cx="115.4" cy="51.8" r="3" fill="#f2b20a" stroke="#b8860b" stroke-width="0.7"/><path d="M112.0,59.6 Q112.0,54.5 116.5,54.5 Q121.0,54.5 121.0,59.6 Q116.5,61.1 112.0,59.6 Z" fill="#19b31e" stroke="#0b7a10" stroke-width="0.5"/><path d="M107,57.5 L110.5,55 V56.4 H113.5 V58.6 H110.5 V60 Z" fill="#d2141e"/><path d="M107,55.5 Q108,53.5 110,53.3" stroke="#5aa0d8" stroke-width="0.9" fill="none"/></g>
<g shape-rendering="geometricPrecision"><circle cx="140.4" cy="49.8" r="3.1" fill="#f2b20a" stroke="#b8860b" stroke-width="0.7"/><path d="M135.39999999999998,58.160000000000004 Q135.39999999999998,53.400000000000006 139.2,53.400000000000006 Q143.0,53.400000000000006 143.0,58.160000000000004 Q139.2,59.56 135.39999999999998,58.160000000000004 Z" fill="#19b31e" stroke="#0b7a10" stroke-width="0.5"/><path d="M143.3,52.5 H145.8 V55 H148.3 V57.5 H145.8 V60 H143.3 V57.5 H140.8 V55 H143.3 Z" fill="#21c22a" stroke="#118a17" stroke-width="0.4"/></g>
<g shape-rendering="geometricPrecision"><rect x="220.5" y="47.5" width="12.5" height="12" rx="1.5" fill="#fff" stroke="#5b8fd0" stroke-width="1"/><path d="M224.3,49 L226.8,51.5 L224.3,54 L221.8,51.5 Z" fill="#1fa82a"/><path d="M228.4,52.7 L230.9,55.2 L228.4,57.7 L225.9,55.2 Z" fill="#f07a50"/></g>
<g shape-rendering="geometricPrecision"><circle cx="246.9" cy="49.4" r="2.6" fill="#f2b20a" stroke="#b8860b" stroke-width="0.7"/><circle cx="251.4" cy="51.9" r="3" fill="#f2b20a" stroke="#b8860b" stroke-width="0.7"/><path d="M242.5,59.6 Q242.5,54.5 245.5,54.5 Q248.5,54.5 248.5,59.6 Q245.5,61.1 242.5,59.6 Z" fill="#3b92d8" stroke="#0b7a10" stroke-width="0.5"/><path d="M247,59.7 Q247,54.6 252,54.6 Q257,54.6 257,59.7 Q252,61.2 247,59.7 Z" fill="#19b31e" stroke="#0b7a10" stroke-width="0.5"/></g>
<g shape-rendering="geometricPrecision"><rect x="265.5" y="48" width="13.5" height="11" rx="1" fill="#f8faff" stroke="#4a7cc0" stroke-width="1.1"/><rect x="266" y="48.5" width="2.2" height="10" fill="#3566b0"/><path d="M268.8,49.5 V57.5" stroke="#e07070" stroke-width="0.5" stroke-dasharray="1 1"/><path d="M270,52 H278 M270,55 H278" stroke="#dde6f4" stroke-width="0.6"/></g>
<g shape-rendering="geometricPrecision"><circle cx="299.1" cy="49.3" r="2.9" fill="#f2b20a" stroke="#b8860b" stroke-width="0.7"/><path d="M294.1,57.26 Q294.1,52.5 297.3,52.5 Q300.5,52.5 300.5,57.26 Q297.3,58.66 294.1,57.26 Z" fill="#19b31e" stroke="#0b7a10" stroke-width="0.5"/><rect x="302.3" y="50.5" width="1.8" height="2.2" fill="#f5e23a" transform="rotate(0 303.2 55.8)"/><rect x="302.3" y="50.5" width="1.8" height="2.2" fill="#f5e23a" transform="rotate(45 303.2 55.8)"/><rect x="302.3" y="50.5" width="1.8" height="2.2" fill="#f5e23a" transform="rotate(90 303.2 55.8)"/><rect x="302.3" y="50.5" width="1.8" height="2.2" fill="#f5e23a" transform="rotate(135 303.2 55.8)"/><rect x="302.3" y="50.5" width="1.8" height="2.2" fill="#f5e23a" transform="rotate(180 303.2 55.8)"/><rect x="302.3" y="50.5" width="1.8" height="2.2" fill="#f5e23a" transform="rotate(225 303.2 55.8)"/><rect x="302.3" y="50.5" width="1.8" height="2.2" fill="#f5e23a" transform="rotate(270 303.2 55.8)"/><rect x="302.3" y="50.5" width="1.8" height="2.2" fill="#f5e23a" transform="rotate(315 303.2 55.8)"/><circle cx="303.2" cy="55.8" r="3.4" fill="#f5e23a" stroke="#c9b520" stroke-width="0.4"/><circle cx="303.2" cy="55.8" r="1.1" fill="#1a9a20"/></g>
<g shape-rendering="geometricPrecision"><path d="M454.0,442.1 Q453.8,436.5 458.59999999999997,436.5 Q463.5,436.5 463.5,442.1 Z" fill="#2fc032" stroke="#137a16" stroke-width="0.7"/><path d="M457.3,436.90000000000003 L460.09999999999997,440.90000000000003" stroke="#e8ffe8" stroke-width="0.9"/><circle cx="458.3" cy="433.7" r="2.8" fill="#f5b80c" stroke="#a86a00" stroke-width="0.7"/></g>
<g shape-rendering="geometricPrecision"><path d="M454.0,458.0 Q453.8,452.4 458.59999999999997,452.4 Q463.5,452.4 463.5,458.0 Z" fill="#2fc032" stroke="#137a16" stroke-width="0.7"/><path d="M457.3,452.8 L460.09999999999997,456.8" stroke="#e8ffe8" stroke-width="0.9"/><circle cx="458.3" cy="449.59999999999997" r="2.8" fill="#f5b80c" stroke="#a86a00" stroke-width="0.7"/></g>
<g shape-rendering="geometricPrecision"><circle cx="456.3" cy="464.8" r="2.8" fill="#f5b80c" stroke="#a86a00" stroke-width="0.7"/><circle cx="460.8" cy="464.8" r="2.8" fill="#f5c80c" stroke="#a86a00" stroke-width="0.7"/><path d="M452,475.5 Q452,468.5 456,468.5 Q459.5,468.5 459.5,475.5 Z" fill="#2fc032" stroke="#137a16" stroke-width="0.6"/><path d="M456,475.5 Q456,468.2 460.8,468.2 Q465.3,468.2 465.3,475.5 Z" fill="#f2d030" stroke="#a88a00" stroke-width="0.6"/><path d="M459.5,469 L462.5,474" stroke="#fff8c0" stroke-width="0.8"/></g>
</svg></body></html>
